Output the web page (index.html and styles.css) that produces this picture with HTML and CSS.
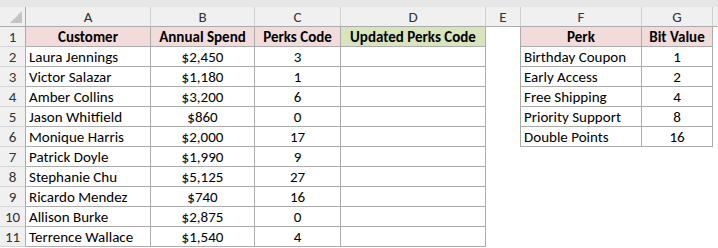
FILE: index.html
```html
<!DOCTYPE html>
<html>
<head>
<meta charset="utf-8">
<link rel="stylesheet" href="styles.css">
</head>
<body>
<div class="topbar"></div>
<div class="sheet">
  <div class="corner"><span class="tri"></span></div>
  <div class="ch">A</div><div class="ch">B</div><div class="ch">C</div><div class="ch">D</div><div class="ch">E</div><div class="ch">F</div><div class="ch">G</div><div class="ch last"></div>

  <div class="rh">1</div>
  <div class="c th pink">Customer</div><div class="c th pink">Annual Spend</div><div class="c th pink">Perks Code</div><div class="c th green">Updated Perks Code</div>
  <div class="gap lb"></div><div class="c th pink">Perk</div><div class="c th pink">Bit Value</div><div class="gap"></div>

  <div class="rh">2</div>
  <div class="c">Laura Jennings</div><div class="c ctr">$2,450</div><div class="c ctr">3</div><div class="c"></div>
  <div class="gap lb"></div><div class="c">Birthday Coupon</div><div class="c ctr">1</div><div class="gap"></div>

  <div class="rh">3</div>
  <div class="c">Victor Salazar</div><div class="c ctr">$1,180</div><div class="c ctr">1</div><div class="c"></div>
  <div class="gap lb"></div><div class="c">Early Access</div><div class="c ctr">2</div><div class="gap"></div>

  <div class="rh">4</div>
  <div class="c">Amber Collins</div><div class="c ctr">$3,200</div><div class="c ctr">6</div><div class="c"></div>
  <div class="gap lb"></div><div class="c">Free Shipping</div><div class="c ctr">4</div><div class="gap"></div>

  <div class="rh">5</div>
  <div class="c">Jason Whitfield</div><div class="c ctr">$860</div><div class="c ctr">0</div><div class="c"></div>
  <div class="gap lb"></div><div class="c">Priority Support</div><div class="c ctr">8</div><div class="gap"></div>

  <div class="rh">6</div>
  <div class="c">Monique Harris</div><div class="c ctr">$2,000</div><div class="c ctr">17</div><div class="c"></div>
  <div class="gap lb"></div><div class="c">Double Points</div><div class="c ctr">16</div><div class="gap"></div>

  <div class="rh">7</div>
  <div class="c">Patrick Doyle</div><div class="c ctr">$1,990</div><div class="c ctr">9</div><div class="c"></div>
  <div class="gap"></div><div class="gap"></div><div class="gap"></div><div class="gap"></div>

  <div class="rh">8</div>
  <div class="c">Stephanie Chu</div><div class="c ctr">$5,125</div><div class="c ctr">27</div><div class="c"></div>
  <div class="gap"></div><div class="gap"></div><div class="gap"></div><div class="gap"></div>

  <div class="rh">9</div>
  <div class="c">Ricardo Mendez</div><div class="c ctr">$740</div><div class="c ctr">16</div><div class="c"></div>
  <div class="gap"></div><div class="gap"></div><div class="gap"></div><div class="gap"></div>

  <div class="rh">10</div>
  <div class="c">Allison Burke</div><div class="c ctr">$2,875</div><div class="c ctr">0</div><div class="c"></div>
  <div class="gap"></div><div class="gap"></div><div class="gap"></div><div class="gap"></div>

  <div class="rh">11</div>
  <div class="c">Terrence Wallace</div><div class="c ctr">$1,540</div><div class="c ctr">4</div><div class="c"></div>
  <div class="gap"></div><div class="gap"></div><div class="gap"></div><div class="gap"></div>
</div>
</body>
</html>
```

FILE: styles.css
```css
html, body {
  margin: 0;
  padding: 0;
  background: #ffffff;
}
body {
  width: 718px;
  height: 248px;
  overflow: hidden;
  font-family: "Carlito", "Lato", "Liberation Sans", sans-serif;
  font-size: 15px;
  color: #000000;
}
.topbar {
  height: 7px;
  background: #e6e6e6;
}
.sheet {
  display: grid;
  grid-template-columns: 26px 125px 104px 86px 145px 35px 121px 71px 5px;
  grid-auto-rows: 20px;
}
.sheet > div {
  box-sizing: border-box;
  line-height: 19px;
  padding-top: 1px;
  white-space: nowrap;
  overflow: hidden;
}
.corner {
  position: relative;
  background: #f0f0f0;
  border-right: 1px solid #ababab;
  border-bottom: 1px solid #ababab;
}
.tri {
  position: absolute;
  right: 3px;
  bottom: 3px;
  width: 0;
  height: 0;
  border-left: 12px solid transparent;
  border-bottom: 12px solid #c4c4c4;
}
.ch {
  background: #f0f0f0;
  border-right: 1px solid #d0d0d0;
  border-bottom: 1px solid #ababab;
  text-align: center;
  color: #333333;
}
.ch.last {
  border-right: none;
}
.rh {
  background: #f0f0f0;
  border-right: 1px solid #ababab;
  border-bottom: 1px solid #d4d4d4;
  text-align: center;
  color: #333333;
}
.c {
  border-right: 1px solid #ababab;
  border-bottom: 1px solid #ababab;
  padding-left: 3px;
  padding-right: 3px;
}
.ctr {
  text-align: center;
}
.th {
  font-weight: bold;
  text-align: center;
}
.pink {
  background: #f2dcdb;
}
.green {
  background: #d8e4bc;
}
.gap {
  background: #ffffff;
}
.gap.lb {
  border-right: 1px solid #ababab;
}
```
